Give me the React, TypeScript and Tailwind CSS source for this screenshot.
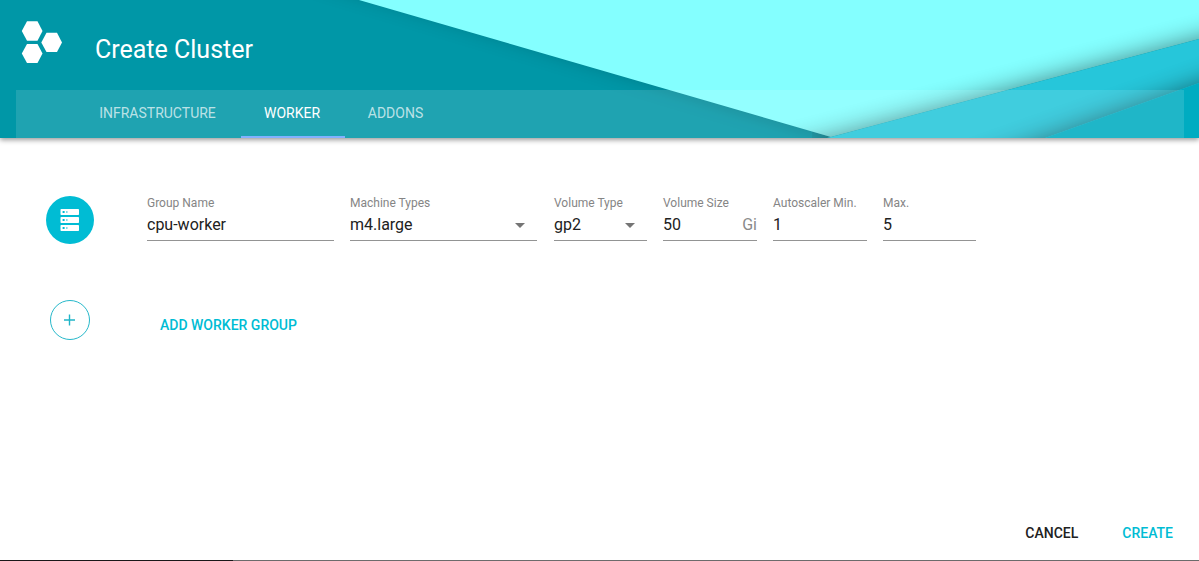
import React from "react";

const tabs = [
  { label: "INFRASTRUCTURE", width: "w-[165px]", active: false },
  { label: "WORKER", width: "w-[104px]", active: true },
  { label: "ADDONS", width: "w-[103px]", active: false },
];

function HeaderBackground() {
  return (
    <svg
      className="absolute inset-0 h-full w-full"
      viewBox="0 0 1199 138"
      preserveAspectRatio="none"
      aria-hidden="true"
    >
      <defs>
        <filter id="soft" x="-20%" y="-60%" width="140%" height="220%">
          <feGaussianBlur stdDeviation="12" />
        </filter>
        <clipPath id="light">
          <path d="M359 0H1199V39L831 137Z" />
        </clipPath>
        <clipPath id="middle">
          <path d="M1199 39V83L1045 138H827Z" />
        </clipPath>
      </defs>
      <rect width="1199" height="138" fill="#0097a7" />
      <path d="M300 -30L831 130L1300 10V-30Z" fill="#000" opacity="0.36" filter="url(#soft)" />
      <path d="M820 124L860 124L860 170L820 170Z" fill="#000" opacity="0.3" filter="url(#soft)" />
      <path d="M359 0H1199V39L831 137Z" fill="#84ffff" />
      <g clipPath="url(#light)">
        <path d="M1290 15L740 161V240H1290Z" fill="#000" opacity="0.48" filter="url(#soft)" />
      </g>
      <path d="M1199 39V138H827Z" fill="#26c6da" />
      <g clipPath="url(#middle)">
        <path d="M1290 51L960 168V240H1290Z" fill="#000" opacity="0.45" filter="url(#soft)" />
      </g>
      <path d="M1199 83V138H1045Z" fill="#00acc1" />
    </svg>
  );
}

function Logo() {
  return (
    <svg className="mt-[21px] ml-[21px] h-[43px] w-[42px] shrink-0" viewBox="0 0 42 43" fill="#fff">
      <path d="M6 .2h10.500l5 9.700-5 9.800H6L.8 9.900Z" />
      <path d="M6 23h10.500l5 9.500-5 9.500H6L.8 32.500Z" />
      <path d="M25.500 11.700H36l5 9.700-5 9.600H25.500l-5.200-9.600Z" />
    </svg>
  );
}

function Field({
  label,
  value,
  className,
  select = false,
  unit,
}: {
  label: string;
  value: string;
  className: string;
  select?: boolean;
  unit?: string;
}) {
  return (
    <div className={`h-[46px] shrink-0 border-b border-[#949494] ${className}`}>
      <div className="h-[17px] text-[12px] leading-[17px] whitespace-nowrap text-[#858585]">
        {label}
      </div>
      <div className="flex h-[26px] items-center text-[16px] leading-[26px] text-[#212121]">
        <span className="grow">{value}</span>
        {unit && <span className="text-[#8a8a8a]">{unit}</span>}
        {select && (
          <svg className="mr-3 h-[5px] w-[10px]" viewBox="0 0 10 5" fill="#757575">
            <path d="M0 0h10L5 5Z" />
          </svg>
        )}
      </div>
    </div>
  );
}

function ServerIcon() {
  return (
    <svg className="h-[24px] w-[20px]" viewBox="0 0 20 24">
      {[1, 9, 17].map((y) => (
        <g key={y}>
          <rect x="0.500" y={y} width="18.500" height="6" rx="0.800" fill="#fff" />
          <rect x="2.600" y={y + 2} width="2" height="2" fill="#00bcd4" />
          <rect x="6" y={y + 2} width="1.600" height="2" fill="#80deea" />
        </g>
      ))}
    </svg>
  );
}

export default function App() {
  return (
    <div className="flex h-[561px] w-[1199px] flex-col overflow-hidden bg-white font-['Roboto',sans-serif]">
      <header className="relative h-[138px] shrink-0 shadow-[0_2px_5px_rgba(0,0,0,0.4)]">
        <HeaderBackground />
        <div className="relative flex h-full flex-col">
          <div className="flex h-[90px] items-start">
            <Logo />
            <h1 className="mt-[34px] ml-[32px] text-[25px] leading-[32px] text-white">
              Create Cluster
            </h1>
          </div>
          <nav className="mr-[15px] ml-4 flex h-12 bg-white/12 pl-[60px]">
            {tabs.map((t) => (
              <button
                key={t.label}
                className={`${t.width} border-b-2 pr-0.5 text-center text-[14px] leading-[46px] ${
                  t.active ? "border-[#82b1ff] text-white" : "border-transparent text-white/70"
                }`}
              >
                {t.label}
              </button>
            ))}
          </nav>
        </div>
      </header>

      <main className="flex grow flex-col pt-[57px]">
        <div className="flex h-[49px] items-start">
          <div className="mt-px ml-[46px] flex h-12 w-12 items-center justify-center rounded-full bg-[#00bcd4]">
            <ServerIcon />
          </div>
          <Field label="Group Name" value="cpu-worker" className="ml-[53px] w-[187px]" />
          <Field label="Machine Types" value="m4.large" className="ml-4 w-[187px]" select />
          <Field label="Volume Type" value="gp2" className="ml-[17px] w-[93px]" select />
          <Field label="Volume Size" value="50" className="ml-4 w-[94px]" unit="Gi" />
          <Field label="Autoscaler Min." value="1" className="ml-4 w-[94px]" />
          <Field label="Max." value="5" className="ml-4 w-[93px]" />
        </div>
        <div className="mt-[56px] flex h-10">
          <button
            aria-label="Add"
            className="ml-[50px] flex h-10 w-10 items-center justify-center rounded-full border border-[#26b8ca]"
          >
            <svg className="h-3 w-3" viewBox="0 0 12 12" stroke="#20b5c8" strokeWidth="1.400">
              <path d="M5.500 .5v11M0 6h11" />
            </svg>
          </button>
          <button className="mt-[7px] ml-[70px] h-9 text-[14px] font-medium text-[#00bcd4]">
            ADD WORKER GROUP
          </button>
        </div>
      </main>

      <footer className="flex h-[45px] shrink-0 items-start justify-end pr-[26px] text-[14px] leading-[20px] font-medium">
        <button className="mt-2 text-[#212121]">CANCEL</button>
        <button className="mt-2 ml-[44px] text-[#00bcd4]">CREATE</button>
      </footer>
      <div className="flex h-px shrink-0">
        <div className="w-[233px] bg-[#1a1719]" />
        <div className="grow bg-[#6b6b6b]" />
      </div>
    </div>
  );
}
